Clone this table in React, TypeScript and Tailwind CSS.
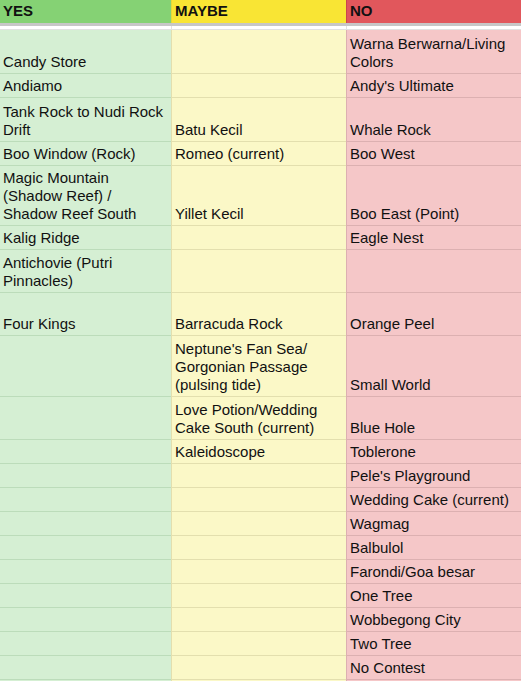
import React from "react";

type Row = { h: string; yes?: string; maybe?: string; no?: string };

const rows: Row[] = [
  { h: "h-[44px]", yes: "Candy Store", no: "Warna Berwarna/Living Colors" },
  { h: "h-[24px]", yes: "Andiamo", no: "Andy's Ultimate" },
  { h: "h-[44px]", yes: "Tank Rock to Nudi Rock Drift", maybe: "Batu Kecil", no: "Whale Rock" },
  { h: "h-[24px]", yes: "Boo Window (Rock)", maybe: "Romeo (current)", no: "Boo West" },
  { h: "h-[60px]", yes: "Magic Mountain (Shadow Reef) / Shadow Reef South", maybe: "Yillet Kecil", no: "Boo East (Point)" },
  { h: "h-[24px]", yes: "Kalig Ridge", no: "Eagle Nest" },
  { h: "h-[43px]", yes: "Antichovie (Putri Pinnacles)" },
  { h: "h-[43px]", yes: "Four Kings", maybe: "Barracuda Rock", no: "Orange Peel" },
  { h: "h-[61px]", maybe: "Neptune's Fan Sea/ Gorgonian Passage (pulsing tide)", no: "Small World" },
  { h: "h-[43px]", maybe: "Love Potion/Wedding Cake South (current)", no: "Blue Hole" },
  { h: "h-[24px]", maybe: "Kaleidoscope", no: "Toblerone" },
  { h: "h-[24px]", no: "Pele's Playground" },
  { h: "h-[24px]", no: "Wedding Cake (current)" },
  { h: "h-[24px]", no: "Wagmag" },
  { h: "h-[24px]", no: "Balbulol" },
  { h: "h-[24px]", no: "Farondi/Goa besar" },
  { h: "h-[24px]", no: "One Tree" },
  { h: "h-[24px]", no: "Wobbegong City" },
  { h: "h-[24px]", no: "Two Tree" },
  { h: "h-[24px]", no: "No Contest" },
  { h: "h-[24px]" },
];

const Cell = ({ text, className }: { text?: string; className: string }) => (
  <div className={`flex items-end border-b px-[3px] pb-[2px] leading-[18px] ${className}`}>
    <span>{text}</span>
  </div>
);

export default function App() {
  return (
    <div
      className="w-[521px] h-[681px] overflow-hidden bg-white text-[15px] text-[#111]"
      style={{ fontFamily: '"Liberation Sans", Arial, sans-serif' }}
    >
      <div className="grid grid-cols-[171px_175px_175px] h-[21px] font-bold">
        <div className="bg-[#85d274] px-[3px] flex items-center">YES</div>
        <div className="bg-[#f9e534] px-[3px] flex items-center border-l border-[#e8d63a]">MAYBE</div>
        <div className="bg-[#e1575c] px-[3px] flex items-center border-l border-[#c9474c]">NO</div>
      </div>
      <div className="h-[5px] bg-[#c7c7c7]" />
      <div className="grid grid-cols-[171px_175px_175px] h-[4px]">
        <div className="bg-white border-b border-[#e2e2e2]" />
        <div className="bg-white border-b border-l border-[#e2e2e2]" />
        <div className="bg-white border-b border-l border-[#e2e2e2]" />
      </div>
      {rows.map((r, i) => (
        <div key={i} className={`grid grid-cols-[171px_175px_175px] ${r.h}`}>
          <Cell text={r.yes} className="bg-[#d5efd3] border-[#bcdcba]" />
          <Cell text={r.maybe} className="bg-[#fbf8c7] border-[#e3dfae] border-l" />
          <Cell text={r.no} className="bg-[#f5c7c8] border-[#dcb0b1] border-l" />
        </div>
      ))}
    </div>
  );
}
